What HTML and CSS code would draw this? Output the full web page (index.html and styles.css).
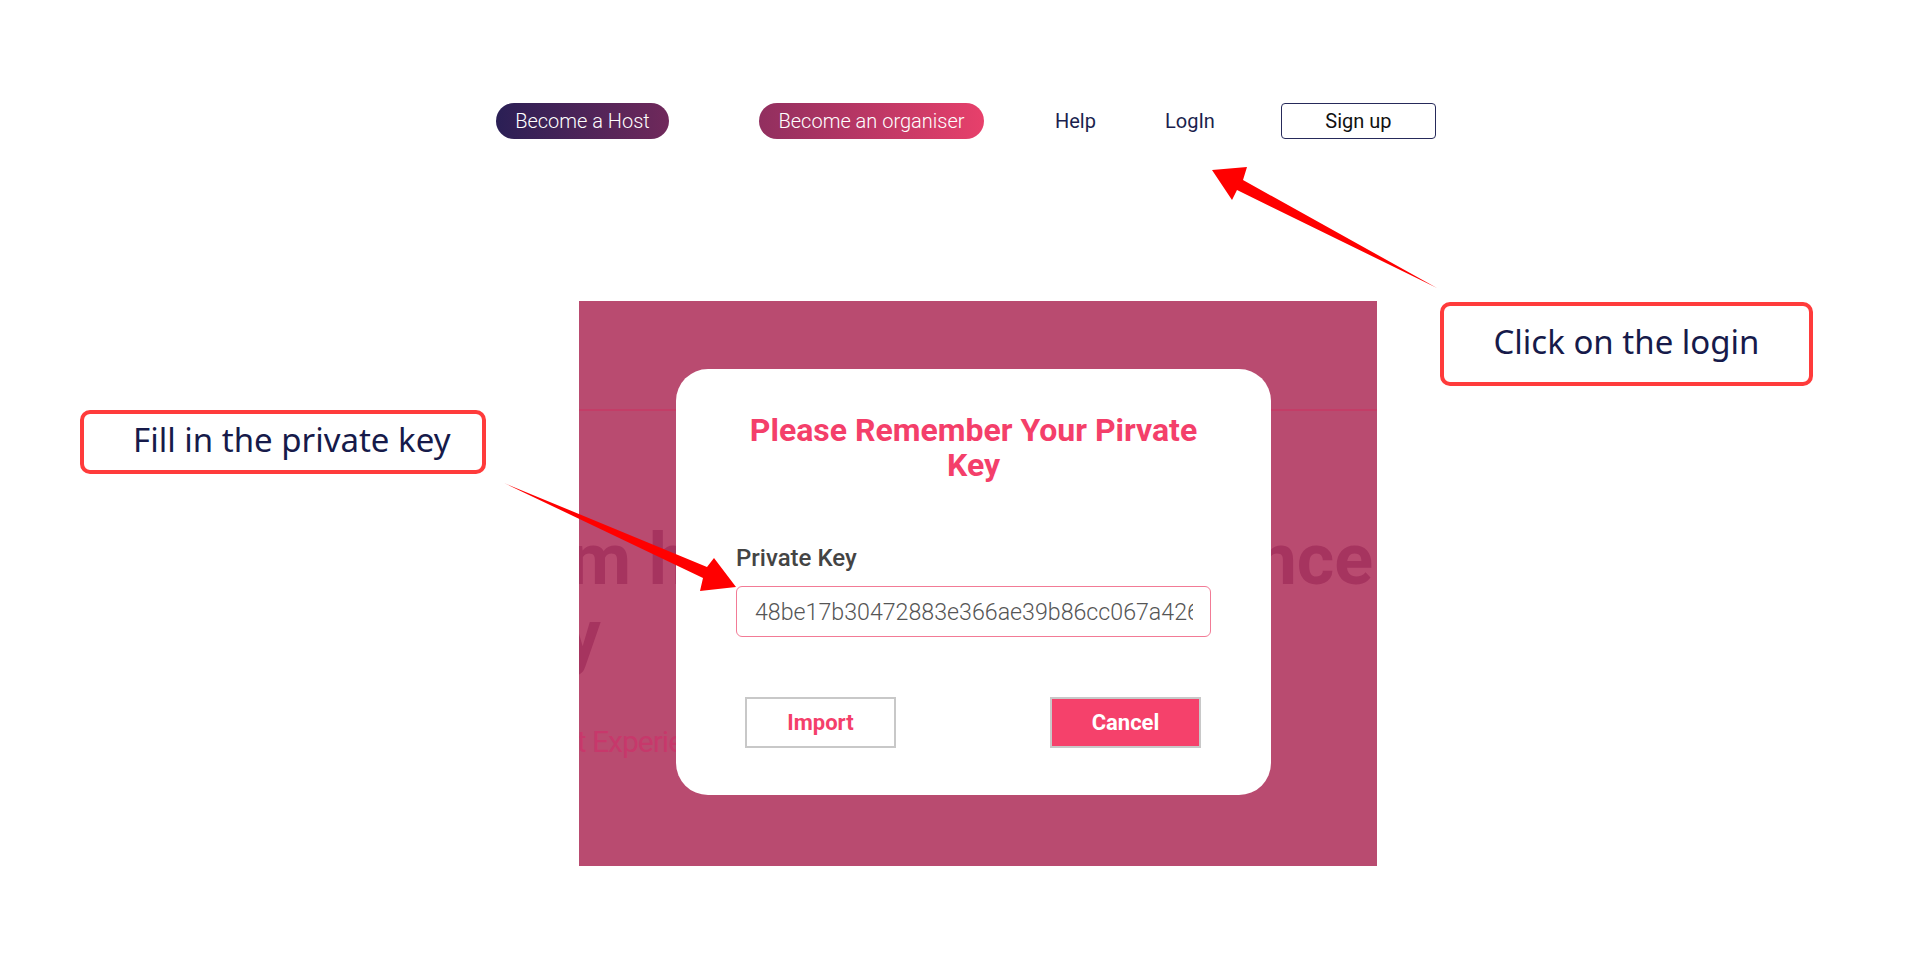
FILE: index.html
```html
<!DOCTYPE html>
<html lang="en">
<head>
<meta charset="utf-8">
<title>Login guide</title>
<link rel="stylesheet" href="styles.css">
</head>
<body>
<nav class="nav">
  <a class="pill pill-host">Become a Host</a>
  <a class="pill pill-org">Become an organiser</a>
  <a class="link link-help">Help</a>
  <a class="link link-login">LogIn</a>
  <a class="signup">Sign up</a>
</nav>

<section class="panel">
  <div class="panel-bar"></div>
  <h1 class="hero-title">Premium <span class="hero-spread">hosting with excellence</span><br>&amp; luxury</h1>
  <p class="hero-sub">Enjoy the Greatest Experience</p>

  <div class="modal">
    <h2 class="modal-title">Please Remember Your Pirvate Key</h2>
    <label class="field-label" for="pk">Private Key</label>
    <input class="field-input" id="pk" type="text" value="48be17b30472883e366ae39b86cc067a426f1d">
    <div class="modal-actions">
      <button class="btn btn-import">Import</button>
      <button class="btn btn-cancel">Cancel</button>
    </div>
  </div>
</section>

<div class="callout callout-login">Click on the login</div>
<div class="callout callout-key">Fill in the private key</div>

<svg class="arrows" width="1920" height="956" viewBox="0 0 1920 956">
  <polygon fill="#ff0000" points="1212,170 1247,167 1243,180 1437,288 1237,190 1232,200"/>
  <polygon fill="#ff0000" points="504,483 707,567 714,558 736,587 700,591 703,578"/>
</svg>
</body>
</html>
```

FILE: styles.css
```css
* { box-sizing: border-box; }

body {
  margin: 0;
  background: #ffffff;
  font-family: Roboto, "Noto Sans", sans-serif;
  position: relative;
  width: 1920px;
  height: 956px;
  overflow: hidden;
}

.nav {
  display: flex;
  align-items: center;
  padding: 103px 0 0 496px;
  height: 139px;
}

.pill {
  height: 36px;
  display: flex;
  align-items: center;
  justify-content: center;
  border-radius: 18px;
  color: #ffffff;
  font-size: 20px;
  font-weight: 300;
}

.pill-host {
  width: 173px;
  background: linear-gradient(90deg, #2a1f55 0%, #70295b 100%);
}

.pill-org {
  width: 225px;
  margin-left: 90px;
  background: linear-gradient(90deg, #912f5f 0%, #e7406b 100%);
}

.link {
  font-size: 20px;
  font-weight: 400;
  color: #1b1f4e;
}

.link-help { margin-left: 71px; }
.link-login { margin-left: 69px; }

.signup {
  margin-left: 66px;
  width: 155px;
  height: 36px;
  border: 1px solid #262a5a;
  border-radius: 4px;
  display: flex;
  align-items: center;
  justify-content: center;
  font-size: 20px;
  color: #111111;
}

.panel {
  position: relative;
  margin: 162px 0 0 579px;
  width: 798px;
  height: 565px;
  background: #b94b70;
  overflow: hidden;
}

.panel-bar {
  height: 2px;
  margin-top: 108px;
  background: #c33d67;
}

.hero-title {
  margin: 111px 0 0 -243px;
  white-space: nowrap;
  font-size: 72px;
  line-height: 76px;
  font-weight: 700;
  color: #a6345f;
}

.hero-spread {
  word-spacing: -18px;
}

.hero-sub {
  margin: 50px 0 0 -218px;
  white-space: nowrap;
  font-size: 30px;
  font-weight: 400;
  color: #c7386b;
  letter-spacing: -1px;
}

.modal {
  position: absolute;
  left: 97px;
  top: 68px;
  width: 595px;
  height: 426px;
  background: #ffffff;
  border-radius: 32px;
  padding: 44px 60px 0 60px;
  display: flex;
  flex-direction: column;
}

.modal-title {
  margin: 0;
  text-align: center;
  font-size: 32px;
  line-height: 35px;
  font-weight: 700;
  color: #f43f6a;
}

.field-label {
  margin-top: 61px;
  font-size: 24px;
  line-height: 28px;
  font-weight: 500;
  color: #444444;
}

.field-input {
  margin-top: 14px;
  width: 100%;
  height: 51px;
  border: 1.5px solid #f27b96;
  border-radius: 6px;
  padding: 0 17px 0 18px;
  outline: none;
  background: #ffffff;
  font-family: Roboto, sans-serif;
  font-size: 23.2px;
  font-weight: 300;
  color: #555555;
}

.modal-actions {
  margin-top: 60px;
  padding: 0 10px 0 9px;
  display: flex;
  justify-content: space-between;
}

.btn {
  width: 151px;
  height: 51px;
  border: 2px solid #c8c8c8;
  font-family: Roboto, sans-serif;
  font-size: 22px;
  font-weight: 700;
  border-radius: 0;
}

.btn-import {
  background: #ffffff;
  color: #f43f6a;
}

.btn-cancel {
  background: #f5416b;
  color: #ffffff;
}

.callout {
  position: absolute;
  border: 4px solid #ff3b3b;
  border-radius: 10px;
  background: #ffffff;
  display: flex;
  align-items: center;
  font-family: "Noto Sans", "Open Sans", sans-serif;
  font-size: 33px;
  color: #161a4a;
}

.callout-login {
  left: 1440px;
  top: 302px;
  width: 373px;
  height: 84px;
  justify-content: center;
  padding-bottom: 5px;
}

.callout-key {
  left: 80px;
  top: 410px;
  width: 406px;
  height: 64px;
  padding-left: 49px;
  padding-bottom: 6px;
}

.arrows {
  position: absolute;
  left: 0;
  top: 0;
  pointer-events: none;
}
```
